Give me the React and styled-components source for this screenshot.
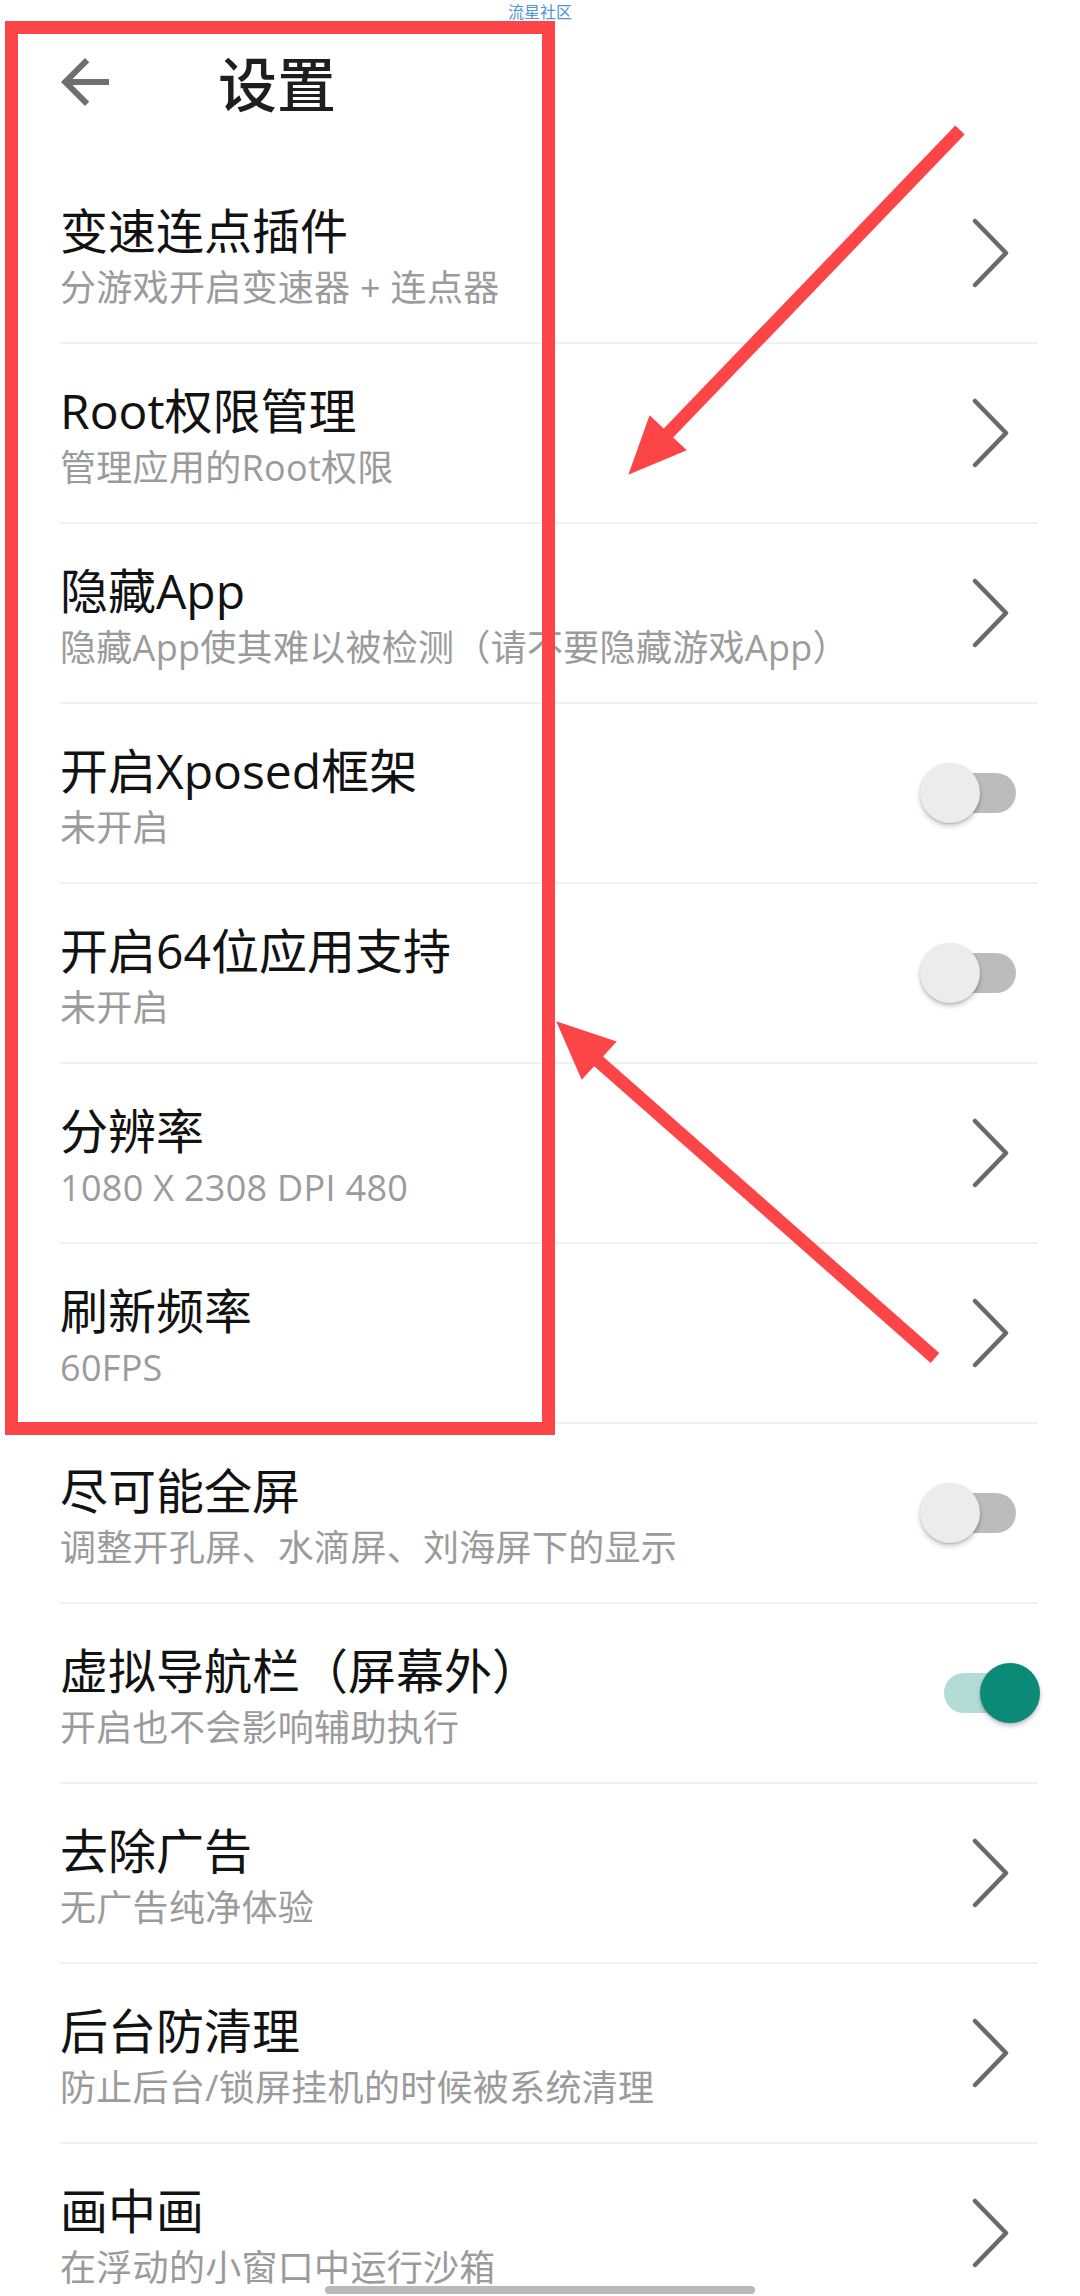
import React from "react";
import styled, { createGlobalStyle } from "styled-components";

const Global = createGlobalStyle`
  html, body {
    margin: 0;
    padding: 0;
    background: #ffffff;
  }
  body {
    width: 1080px;
    height: 2296px;
    overflow: hidden;
    font-family: "Open Sans", "Noto Sans CJK SC", sans-serif;
  }
`;

const Page = styled.div`
  position: relative;
  width: 1080px;
  height: 2296px;
  overflow: hidden;
  background: #ffffff;
`;

const Toolbar = styled.header`
  display: flex;
  align-items: center;
  height: 164px;
  padding-left: 49px;
  box-sizing: border-box;
`;

const BackButton = styled.div`
  width: 72px;
  height: 72px;
  display: flex;
  align-items: center;
  justify-content: center;
  color: #6f6f6f;
`;

const Title = styled.h1`
  margin: 0 0 0 97px;
  font-family: "Noto Sans CJK SC", sans-serif;
  font-size: 59px;
  font-weight: 500;
  line-height: 72px;
  color: #1e1e1e;
`;

const List = styled.div`
  display: flex;
  flex-direction: column;
`;

const Row = styled.div`
  display: flex;
  align-items: center;
  height: 180px;
  margin: 0 42px 0 60px;
  box-sizing: border-box;
  border-bottom: 2px solid #f0f0f0;
`;

const TextBlock = styled.div`
  flex: 1;
  align-self: stretch;
  padding-top: 38px;
  display: flex;
  flex-direction: column;
  min-width: 0;
`;

const ItemTitle = styled.div`
  font-size: 48px;
  line-height: 58px;
  color: #121212;
  white-space: nowrap;
`;

const ItemSub = styled.div`
  margin-top: 3px;
  font-size: 36px;
  line-height: 50px;
  letter-spacing: 0.3px;
  color: #9b9b9b;
  white-space: nowrap;
`;

const Chevron = styled.svg`
  width: 40px;
  height: 70px;
  margin-right: 28px;
  flex-shrink: 0;
`;

const Track = styled.div`
  position: relative;
  width: 72px;
  height: 40px;
  border-radius: 20px;
  margin-right: 22px;
  flex-shrink: 0;
  background: ${(p) => (p.$on ? "#b4dcd7" : "#bcbcbc")};
`;

const Thumb = styled.div`
  position: absolute;
  top: -10px;
  left: ${(p) => (p.$on ? "36px" : "-24px")};
  width: 60px;
  height: 60px;
  border-radius: 50%;
  background: ${(p) => (p.$on ? "#0b8a78" : "#ececec")};
  box-shadow: 0 3px 5px rgba(0, 0, 0, 0.22), 0 1px 2px rgba(0, 0, 0, 0.12);
`;

const Watermark = styled.div`
  position: absolute;
  top: 1px;
  left: 0;
  right: 0;
  text-align: center;
  font-family: "Noto Sans CJK SC", sans-serif;
  font-size: 16px;
  line-height: 20px;
  color: #4f93dc;
`;

const Highlight = styled.div`
  position: absolute;
  left: 5px;
  top: 21px;
  width: 550px;
  height: 1414px;
  box-sizing: border-box;
  border: 13px solid #fb4547;
  pointer-events: none;
`;

const Arrows = styled.svg`
  position: absolute;
  left: 0;
  top: 0;
  width: 1080px;
  height: 2296px;
  pointer-events: none;
`;

const HomeBar = styled.div`
  position: absolute;
  left: 325px;
  top: 2286px;
  width: 430px;
  height: 8px;
  border-radius: 4px;
  background: #b9b9b9;
`;

const items = [
  { t: "变速连点插件", s: "分游戏开启变速器 + 连点器", k: "nav" },
  { t: "Root权限管理", s: "管理应用的Root权限", k: "nav" },
  { t: "隐藏App", s: "隐藏App使其难以被检测（请不要隐藏游戏App）", k: "nav" },
  { t: "开启Xposed框架", s: "未开启", k: "off" },
  { t: "开启64位应用支持", s: "未开启", k: "off" },
  { t: "分辨率", s: "1080 X 2308 DPI 480", k: "nav" },
  { t: "刷新频率", s: "60FPS", k: "nav" },
  { t: "尽可能全屏", s: "调整开孔屏、水滴屏、刘海屏下的显示", k: "off" },
  { t: "虚拟导航栏（屏幕外）", s: "开启也不会影响辅助执行", k: "on" },
  { t: "去除广告", s: "无广告纯净体验", k: "nav" },
  { t: "后台防清理", s: "防止后台/锁屏挂机的时候被系统清理", k: "nav" },
  { t: "画中画", s: "在浮动的小窗口中运行沙箱", k: "nav" },
];

function ChevronIcon() {
  return (
    <Chevron viewBox="0 0 40 70">
      <polyline
        points="5,3 36,35 5,67"
        fill="none"
        stroke="#6a6a6a"
        strokeWidth="4.5"
        strokeLinecap="round"
        strokeLinejoin="round"
      />
    </Chevron>
  );
}

function Switch({ on }) {
  return (
    <Track $on={on}>
      <Thumb $on={on} />
    </Track>
  );
}

export default function App() {
  return (
    <Page>
      <Global />
      <Toolbar>
        <BackButton>
          <svg width="72" height="72" viewBox="0 0 24 24">
            <path
              fill="currentColor"
              d="M20 11H7.83l5.59-5.59L12 4l-8 8 8 8 1.41-1.41L7.83 13H20v-2z"
            />
          </svg>
        </BackButton>
        <Title>设置</Title>
      </Toolbar>
      <List>
        {items.map((it) => (
          <Row key={it.t}>
            <TextBlock>
              <ItemTitle>{it.t}</ItemTitle>
              <ItemSub>{it.s}</ItemSub>
            </TextBlock>
            {it.k === "nav" ? <ChevronIcon /> : <Switch on={it.k === "on"} />}
          </Row>
        ))}
      </List>

      <Watermark>流星社区</Watermark>
      <Highlight />
      <Arrows viewBox="0 0 1080 2296">
        <g fill="#fb4547" stroke="#fb4547">
          <line x1="960" y1="130" x2="655" y2="447" strokeWidth="13" />
          <polygon points="630,473 650,417 685,450" strokeWidth="2" />
          <line x1="935" y1="1358" x2="588" y2="1052" strokeWidth="13" />
          <polygon points="558,1023 615,1042 582,1078" strokeWidth="2" />
        </g>
      </Arrows>
      <HomeBar />
    </Page>
  );
}
